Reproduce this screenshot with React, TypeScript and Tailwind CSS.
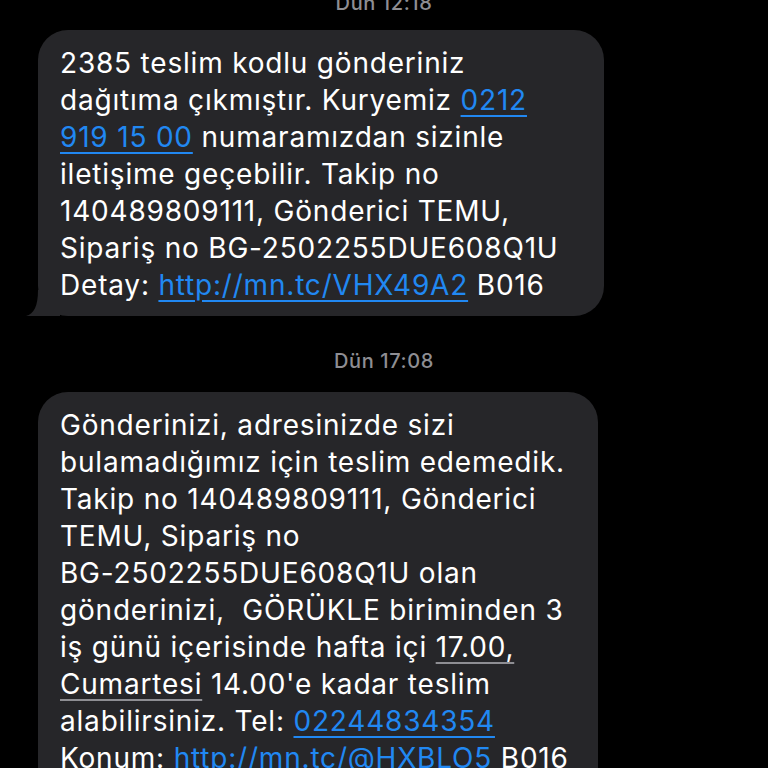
import React from "react";

const LINK = "text-[#2188f2] underline decoration-2 underline-offset-[5px]";
const DATA = "underline decoration-[#8e8e93] decoration-2 underline-offset-[5px]";

function Stamp({ children, className }: { children: React.ReactNode; className?: string }) {
  return (
    <div className={"text-center text-[20px] leading-6 font-medium tracking-[0.6px] text-[#8e8e93] " + (className ?? "")}>
      {children}
    </div>
  );
}

function Bubble({ children, width, tail }: { children: React.ReactNode; width: string; tail?: boolean }) {
  return (
    <div className={"relative ml-[38px] rounded-[30px] bg-[#262629] pl-[22px] pr-4 pt-[15px] pb-[12px] " + width}>
      <div className="text-[28px] leading-[37px] text-white tracking-[0.8px]">{children}</div>
      {tail && (
        <svg className="absolute left-[-12px] bottom-0" width="34" height="26" viewBox="0 0 34 26">
          <path d="M12 0 L34 0 L34 26 L0 26 C8 24 12 16 12 0 Z" fill="#262629" />
        </svg>
      )}
    </div>
  );
}

export default function App() {
  return (
    <div
      className="h-[768px] w-[768px] overflow-hidden bg-black"
      style={{ fontFamily: "Inter, 'Noto Sans', sans-serif" }}
    >
      <Stamp className="-mt-[9px]">Dün 12:18</Stamp>
      <div className="mt-[15px]">
        <Bubble width="w-[566px]" tail>
          2385 teslim kodlu gönderiniz
          <br />
          dağıtıma çıkmıştır. Kuryemiz <span className={LINK}>0212</span>
          <br />
          <span className={LINK}>919 15 00</span> numaramızdan sizinle
          <br />
          iletişime geçebilir. Takip no
          <br />
          140489809111, Gönderici TEMU,
          <br />
          Sipariş no BG-2502255DUE608Q1U
          <br />
          Detay: <span className={LINK}>http://mn.tc/VHX49A2</span> B016
        </Bubble>
      </div>
      <Stamp className="mt-[33px]">Dün 17:08</Stamp>
      <div className="mt-[19px]">
        <Bubble width="w-[560px]">
          Gönderinizi, adresinizde sizi
          <br />
          bulamadığımız için teslim edemedik.
          <br />
          Takip no 140489809111, Gönderici
          <br />
          TEMU, Sipariş no
          <br />
          BG-2502255DUE608Q1U olan
          <br />
          gönderinizi,&nbsp; GÖRÜKLE biriminden 3
          <br />
          iş günü içerisinde hafta içi <span className={DATA}>17.00,</span>
          <br />
          <span className={DATA}>Cumartesi</span> 14.00'e kadar teslim
          <br />
          alabilirsiniz. Tel: <span className={LINK}>02244834354</span>
          <br />
          Konum: <span className={LINK}>http://mn.tc/@HXBLO5</span> B016
          <br />
          &nbsp;
        </Bubble>
      </div>
    </div>
  );
}
